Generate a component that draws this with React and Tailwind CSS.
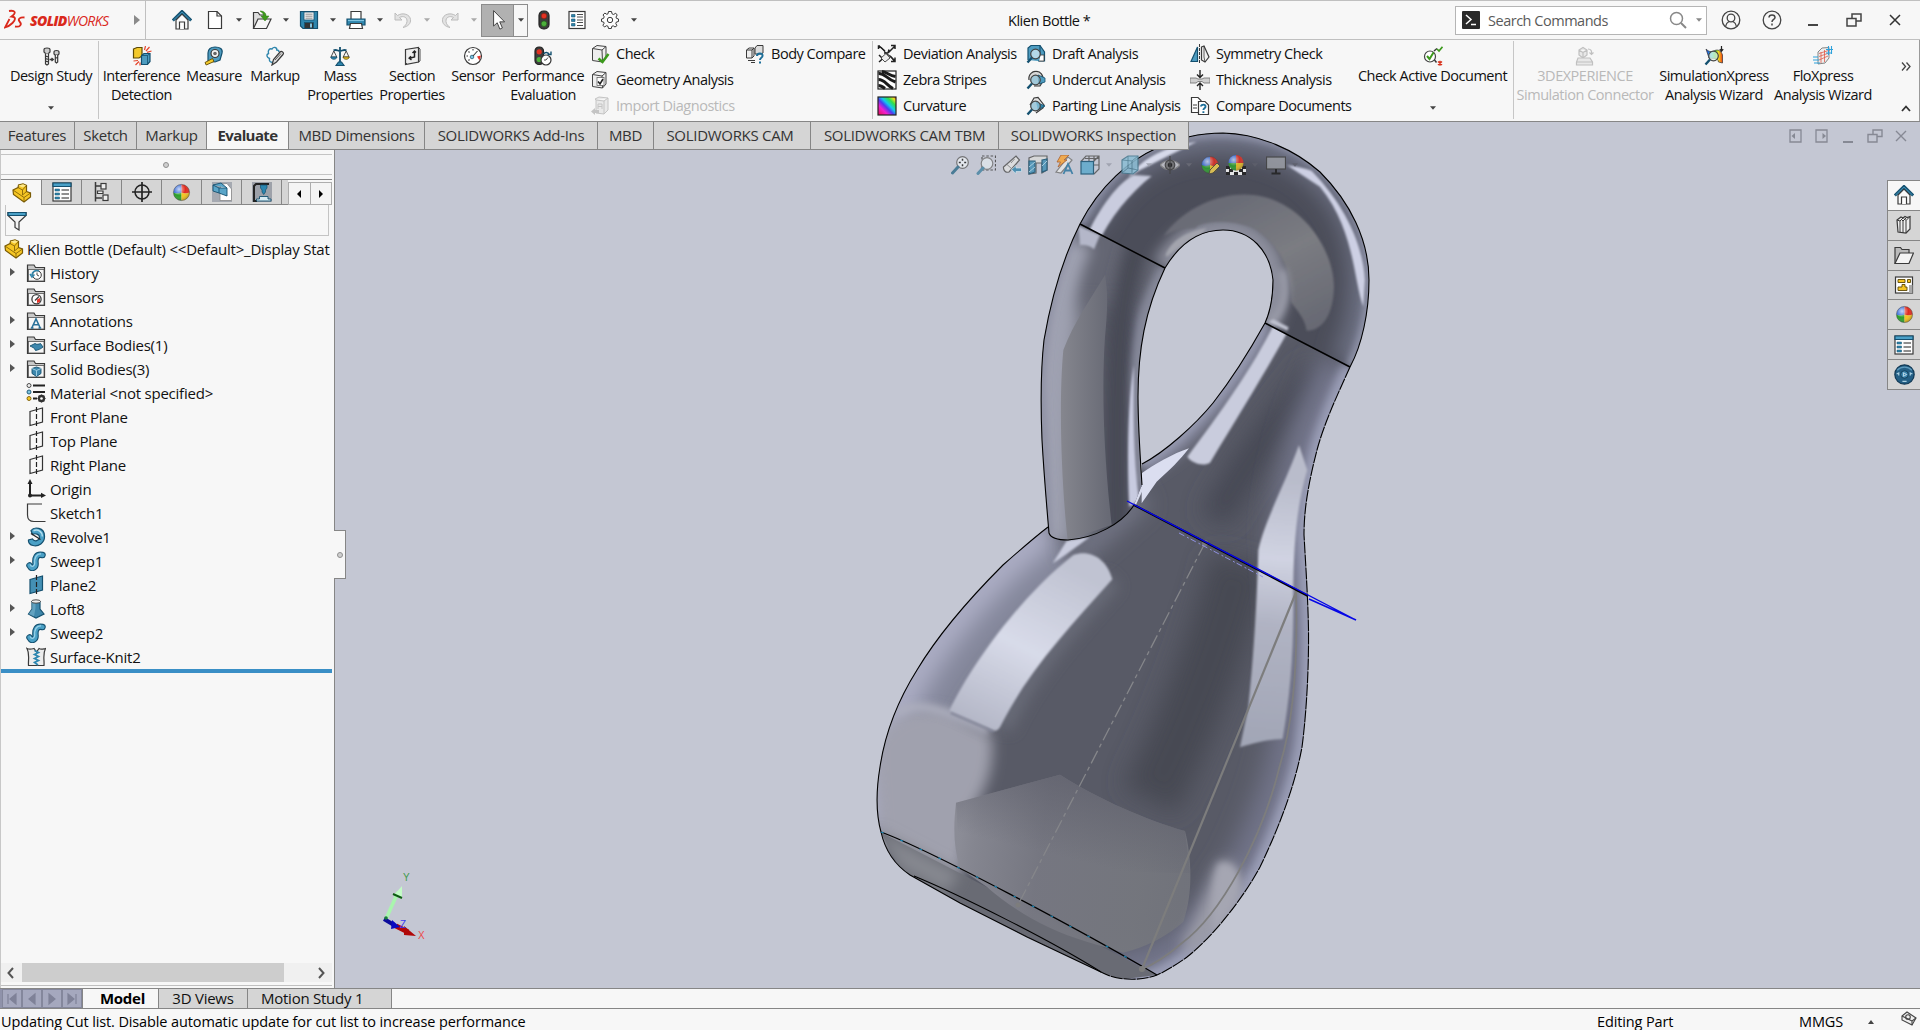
import React from "react";

/* ---------- generic helpers ---------- */
function Ic({ s = 20, children, className = "" }) {
  return (
    <svg width={s} height={s} viewBox="0 0 20 20" fill="none" stroke="#3a3a3a" strokeWidth="1.2" className={"block shrink-0 " + className}>
      {children}
    </svg>
  );
}

function Caret({ className = "", color = "#444" }) {
  return (
    <svg width="6" height="4" viewBox="0 0 7 4" className={"block shrink-0 " + className}>
      <path d="M0 0H7L3.5 4Z" fill={color} />
    </svg>
  );
}

const BL = "#2f86ad";
const DB = "#14506f";
const LB = "#7fc4e0";

/* ---------- title bar icons ---------- */
const Home = ({ s = 20 }) => (
  <Ic s={s}>
    <path d="M4 10V19H16V10L10 4Z" fill="#fafafa" />
    <path d="M7.5 19V12H12.5V19" fill="#fff" />
    <path d="M.8 10.5L10 1.5L19.2 10.5" stroke={DB} strokeWidth="3" />
    <path d="M1.5 10L10 2L18.5 10" stroke="#3f92b8" strokeWidth="1" />
  </Ic>
);
const NewDoc = () => (
  <Ic>
    <path d="M3.5 1.5H12L16.5 6V18.5H3.5Z" fill="#fff" />
    <path d="M12 1.5V6H16.5" />
  </Ic>
);
const OpenDoc = () => (
  <Ic>
    <path d="M1.5 18V2.500H6L8 5H13V9" fill="#ddd" />
    <path d="M1.500 18.500L6 9H19L14.500 18.500Z" fill="#f6f6f6" />
    <path d="M8 1C12 1 14 3 14 6H17L13 11L9 6H11.500C11.500 4 10.500 2.500 8 1Z" fill="#3e9a1c" stroke="#2c7a12" strokeWidth=".5" />
  </Ic>
);
const Save = () => (
  <Ic>
    <path d="M1.500 1.500H18.500V18.500H4L1.500 16Z" fill={BL} stroke={DB} />
    <rect x="5" y="2" width="10" height="8" fill="#f2f2f2" stroke={DB} strokeWidth=".8" />
    <path d="M6.500 4.200H13.500M6.500 6.200H13.500M6.500 8.200H13.500" stroke="#777" strokeWidth=".8" />
    <rect x="5.500" y="12.500" width="9" height="6" fill="#333" stroke={DB} strokeWidth=".6" />
    <rect x="11" y="13.500" width="2" height="4" fill={LB} stroke="none" />
  </Ic>
);
const Print = () => (
  <Ic>
    <path d="M5 9V1.500H15V9" fill="#fff" />
    <path d="M1 9H19V15H1Z" fill={BL} stroke={DB} />
    <path d="M2 10.500H18" stroke={LB} />
    <path d="M4.500 13.500H15.500L16.500 18.500H3.500Z" fill="#fff" />
  </Ic>
);
const Undo = ({ flip }) => (
  <Ic className={flip ? "-scale-x-100" : ""}>
    <path d="M2 3V10H9L6.500 7.500C10 5.500 14.500 7 14 11.500C13.800 14 12 16 10 17.500C15 16.500 18 13.500 17.500 9.500C17 4.500 10 2 4.500 5.500Z" fill="#e2e2e2" stroke="#bcbcbc" strokeWidth="1" />
  </Ic>
);
const Cursor = () => (
  <Ic s={22}>
    <path d="M6 1.500V15.500L9.300 12.500L11.700 18.300L14 17.200L11.600 11.700H16Z" fill="#fff" stroke="#444" strokeWidth=".9" />
  </Ic>
);
const Traffic = ({ s = 20 }) => (
  <Ic s={s}>
    <rect x="5" y="1" width="10" height="18" rx="4.500" fill="#3d3d3d" stroke="#222" />
    <circle cx="10" cy="6" r="2.800" fill="#e23222" stroke="#7c1a10" strokeWidth=".6" />
    <circle cx="10" cy="13.700" r="2.800" fill="#4db03c" stroke="#1e5c16" strokeWidth=".6" />
  </Ic>
);
const ListDoc = ({ s = 20 }) => (
  <Ic s={s}>
    <rect x="2" y="1.500" width="16" height="17" fill="#fff" />
    <path d="M4.500 4.500H8V7H4.500ZM4.500 9H8V11.500H4.500ZM4.500 13.500H8V16H4.500Z" fill={BL} stroke={DB} strokeWidth=".6" />
    <path d="M10 4.500H16M10 7H16M10 10H16M10 12.500H16M10 15.500H16" strokeWidth=".9" />
  </Ic>
);
const Gear = () => (
  <Ic>
    <path d="M8.500 1.500H11.500L12 3.800L13.600 4.500L15.700 3.200L17.200 5L16 7L16.400 8.300L18.500 9V11.500L16.400 12L15.800 13.600L17 15.600L15 17L13.200 15.800L11.800 16.300L11.300 18.500H8.500L8 16.300L6.500 15.700L4.500 17L2.900 15.200L4.100 13.300L3.600 12L1.500 11.500V9L3.600 8.400L4.200 6.800L3 4.900L4.900 3.100L6.800 4.300L8 3.800Z" strokeWidth="1" fill="#fcfcfc" />
    <circle cx="10" cy="10" r="2.700" strokeWidth="1" />
  </Ic>
);

/* ---------- ribbon icons ---------- */
const Bolts = () => (
  <Ic>
    <path d="M3 3.500C3 1.500 9 1.500 9 3.500V6L7.500 7.500H4.500L3 6Z" fill="#ccc" />
    <path d="M4.500 7.500V18L6 19L7.500 18V7.500M4.500 10L7.500 11M4.500 12.500L7.500 13.500M4.500 15L7.500 16" fill="#eee" />
    <path d="M13 6C13 4 18 4 18 6V8L17 9H14L13 8Z" fill="#ccc" />
    <path d="M14.300 9V16L15.500 17L16.700 16V9M14.300 11.500L16.700 12.200" fill="#eee" />
    <path d="M8.500 13.500H12M10.500 12L12.300 13.500L10.500 15" strokeWidth="1.300" />
  </Ic>
);
const Interf = () => (
  <Ic>
    <path d="M1.500 3L5 1.500H10V10L7 12H1.500Z" fill="#f3c92c" stroke="#5d4a06" />
    <path d="M9.500 9.500L12 7.500H18V15.500L15.500 18.500H9.500Z" fill="#4e9cc0" stroke={DB} />
    <path d="M9.500 9.500H15.500V18.500M15.500 9.500L18 7.500" stroke={DB} strokeWidth=".8" />
    <path d="M12.500 4L13.500 0M14 5L17.500 1M15 6.300L19.500 5M6 14.500L1.500 15M7 15.500L3.500 19M8 16.500V19.500" stroke="#e5452c" strokeWidth="1.200" />
  </Ic>
);
const Measure = () => (
  <Ic>
    <path d="M4 15V7C4 3 7 1 11 1C16 1 19 3 18 7L16 14L11 16Z" fill="#4e9cc0" stroke={DB} />
    <circle cx="11" cy="7.500" r="4" fill="#f4f4f4" />
    <circle cx="11" cy="7.500" r="1.800" fill="#666" stroke="none" />
    <path d="M8.500 12.500L1 16.500L2.200 19L10 15.500Z" fill="#f3c92c" stroke="#5d4a06" strokeWidth=".9" />
  </Ic>
);
const Markup = () => (
  <Ic>
    <path d="M8 16C5 17 4 14.500 4.500 12.500C1.500 11 1 8.500 3.500 7.500C2.500 4 5 2 7 3C8.500 .5 12 1 11.800 4C13.500 4 14 5 14 6" stroke={BL} strokeWidth="1.400" />
    <path d="M7 19L8.500 13.500L15 6C16.500 4.500 19.500 6.500 18 8.500L11.500 16Z" fill="#ddd" />
    <path d="M10 14L16 7.500" strokeWidth=".8" />
  </Ic>
);
const Mass = () => (
  <Ic>
    <path d="M10 1V17M3.500 4.500C6 3 8 5 10 5C12 5 14 3 16.500 4.500" stroke={DB} strokeWidth="1.800" />
    <path d="M6 19.500L8.500 16H11.500L14 19.500Z" fill={BL} stroke={DB} />
    <path d="M1 11L3.800 5L6.800 11Z" strokeWidth=".9" />
    <path d="M13.200 11L16.200 5L19 11Z" strokeWidth=".9" />
    <path d="M.7 11H7C6.500 14 1.200 14 .7 11Z" fill={BL} stroke={DB} strokeWidth=".8" />
    <path d="M13 11H19.300C18.800 14 13.500 14 13 11Z" fill="#f3c92c" stroke="#5d4a06" strokeWidth=".8" />
  </Ic>
);
const Section = () => (
  <Ic>
    <path d="M3.500 3.500L16.500 1.500V16L3.500 18.500Z" fill="#eee" />
    <path d="M3.500 18.500L5 17M16.500 1.500L18 3V15L16.500 16" strokeWidth=".9" />
    <path d="M12.500 5V11L7.500 12.200M10.500 7L12.500 5L14 6.500M9 10.200L7.200 12.200L9.500 13.800" strokeWidth="1.500" stroke="#222" />
  </Ic>
);
const Sensor = ({ s = 20 }) => (
  <Ic s={s}>
    <circle cx="10" cy="10" r="8.500" fill="#fff" />
    <path d="M14 10.500L18 9.500L16.500 14.500Z" fill="#e5352c" stroke="none" />
    <path d="M10 3V4.500M3.500 10H5M5.500 5.500L6.500 6.500M5.500 14.500L6.500 13.500" strokeWidth="1.100" />
    <circle cx="9" cy="11" r="1.800" fill={LB} stroke={DB} strokeWidth=".7" />
    <path d="M10 10L14.500 5" strokeWidth="1.100" />
  </Ic>
);
const Perf = () => (
  <Ic>
    <rect x="2" y="1" width="8.500" height="17.500" rx="4" fill="#3d3d3d" stroke="#222" />
    <circle cx="6.200" cy="5.800" r="2.600" fill="#e23222" stroke="none" />
    <circle cx="6.200" cy="13.500" r="2.600" fill="#4db03c" stroke="none" />
    <circle cx="13" cy="14" r="5" fill="#fff" stroke="#333" />
    <path d="M13 14L15 11.500M13 14H11" strokeWidth=".9" />
    <path d="M10.500 8C12 6 15 6 16.500 8.500M14.500 8.500H18L18 5.500" stroke={DB} strokeWidth="1.400" />
  </Ic>
);
const Cube = ({ fill = "#eee", stroke = "#444" }) => (
  <path d="M2.500 4.500L7 1.500L16 2.500V14L12.500 18L2.500 16.500ZM2.500 4.500L12 6L16 2.500M12 6L12.500 18" fill={fill} stroke={stroke} strokeWidth="1" />
);
const Check = () => (
  <Ic>
    <Cube />
    <path d="M8.500 14.500L12.500 18L18.500 10" stroke="#3c9a1c" strokeWidth="2.500" />
  </Ic>
);
const GeoA = () => (
  <Ic>
    <Cube />
    <rect x="7" y="7.500" width="7" height="8" fill="#fff" stroke="#555" strokeWidth=".7" />
    <path d="M8 11.500L10 13.800L13 9" stroke="#222" strokeWidth="1.600" />
  </Ic>
);
const ImpD = () => (
  <Ic>
    <path d="M5 3L9 1L18 2V14L14 18L6 17V4ZM6 4L14 5L18 2M14 5V18M8 8H12M8 8V13M12 8V13M8 10.500H12" fill="#e9e9e9" stroke="#c4c4c4" strokeWidth="1" />
    <path d="M1 15.500L5 12V14H9V17H5V19Z" fill="#c4c4c4" stroke="none" />
  </Ic>
);
const BodyC = () => (
  <Ic>
    <path d="M1.500 6L4 4H9V12L7 14H1.500ZM1.500 6H7V14M7 6L9 4" fill="#eee" strokeWidth="1" />
    <path d="M10 4L12 1.500H18V9L16 10H10Z" fill="#ddd" strokeWidth="1" />
    <path d="M3 16.500H10M6 18.500H10" strokeWidth="1" />
    <path d="M12 12C12 8.500 18 8.500 17.500 12C17.300 14 15 13.500 15 16M15 17.500V19.500" stroke="#1d6f99" strokeWidth="2" />
  </Ic>
);
const Dev = () => (
  <Ic>
    <path d="M2 2.500C6 3 6 7 10 10C13 12 16 13 17 18" stroke="#333" strokeWidth="1.200" />
    <path d="M2 2L8 7M18 2L11 9M3 2H1.500V5M18 5V1.500H14M11 9L12 5.500M11 9L7 9M14 17.500H18V13.500M18 17L13 12M2 11L6 15M2 18L10 11" strokeWidth="1.500" stroke="#222" />
    <path d="M4 14L9 9.500L13 14L8 18Z" fill="#eee" strokeWidth=".9" />
  </Ic>
);
const Zebra = () => (
  <Ic>
    <rect x="1" y="1" width="18" height="18" fill="#fff" stroke="#222" />
    <path d="M1.500 3.500C8 3 9 9 18.500 12M1.500 9.500C8 9.500 9 15 16 18.500M5 1.500C10 2 12 5.500 18.500 6.500M1.500 15.500C4 15.500 6 17 8 18.500" stroke="#1c1c1c" strokeWidth="2.900" />
  </Ic>
);
const Curv = () => (
  <Ic>
    <defs>
      <linearGradient id="curv" x1="0" y1="1" x2="1" y2="0">
        <stop offset="0" stopColor="#e8104a" />
        <stop offset=".28" stopColor="#f020d0" />
        <stop offset=".45" stopColor="#4b3cf0" />
        <stop offset=".58" stopColor="#12c8f0" />
        <stop offset=".75" stopColor="#2fe04a" />
        <stop offset=".9" stopColor="#f0e020" />
        <stop offset="1" stopColor="#f03010" />
      </linearGradient>
    </defs>
    <rect x="1" y="1" width="18" height="18" fill="url(#curv)" stroke="#222" />
  </Ic>
);
const Lens = ({ c = "#8fc3da" }) => (
  <>
    <circle cx="9.500" cy="10" r="4.800" fill={c} fillOpacity=".75" stroke="#444" />
    <path d="M6 13.500L1.500 18.500" stroke={DB} strokeWidth="2.400" />
  </>
);
const Draft = () => (
  <Ic>
    <path d="M2 16V4L5 1.500H14L18.500 8V17H12" fill="#4e9cc0" stroke={DB} />
    <path d="M14 1.500V17" stroke={DB} />
    <path d="M14.500 11H18V17H13" fill="#fff" strokeWidth=".8" />
    <Lens c="#d6ecf5" />
  </Ic>
);
const Undercut = () => (
  <Ic>
    <path d="M3 10C2 4 7 1 10 1.500C14 1 18 5 17 11L14 16H8" fill="#d8d8d8" />
    <path d="M12 5L19 8V12L13 14Z" fill="#4e9cc0" stroke={DB} strokeWidth=".8" />
    <Lens />
  </Ic>
);
const Parting = () => (
  <Ic>
    <path d="M4 9L8 2L12 1.500L18 9L17 12L10 17" fill="#e4e4e4" />
    <path d="M10 6L19 10L12 14" fill={BL} stroke={DB} strokeWidth=".8" />
    <Lens />
  </Ic>
);
const Symm = () => (
  <Ic>
    <path d="M1 17.500L7.500 3V17.500Z" fill="#4e9cc0" stroke={DB} />
    <path d="M9.500 0V20" strokeWidth="1" strokeDasharray="3 1" />
    <path d="M11.500 3L14 2L19 13L15 18L11.500 16Z" fill="#f2f2f2" />
    <path d="M14 2V13L15 18" strokeWidth=".8" />
  </Ic>
);
const Thick = () => (
  <Ic>
    <path d="M0 8H6L8 9H12L14 8H20V13H14L12 11.500H8L6 13H0Z" fill="#cfcfcf" stroke="#777" strokeWidth=".9" />
    <path d="M10 0V7M7 4.500L10 7.500L13 4.500M10 20V13M7 16L10 13L13 16" stroke="#222" strokeWidth="1.400" />
  </Ic>
);
const CompD = () => (
  <Ic>
    <path d="M1.500 1.500H8L11 4.500V16.500H1.500Z" fill="#fff" />
    <path d="M8.500 5.500H15L18.500 9V18.500H8.500Z" fill="#fff" />
    <path d="M3 9H7M3 12H7" strokeWidth="1" />
    <path d="M11 10.500C11 8 16 8 15.500 10.800C15.300 12.300 13.400 12.300 13.400 14M13.400 15.300V17" stroke="#1d6f99" strokeWidth="1.900" />
  </Ic>
);
const CheckAct = () => (
  <Ic>
    <circle cx="7" cy="10.500" r="5.500" fill="#fff" stroke="#444" />
    <path d="M4 10L6.500 13L10.500 6.500" stroke="#3c9a1c" strokeWidth="2" />
    <path d="M11 5L14 2.500M11.500 14L13.500 16.500" strokeWidth="1.500" />
    <path d="M14 3L16 5L19.500 .8" stroke="#3c9a1c" strokeWidth="1.700" />
    <path d="M15 15.500L19 19M19 15.500L15 19M17 14.800V19.700" stroke="#d8311c" strokeWidth="1.400" />
  </Ic>
);
const Conn3D = () => (
  <Ic>
    <path d="M4 4L8 1.500L12 4V9L8 12L4 9ZM4 4L8 6.500L12 4M8 6.500V12" fill="#e8e8e8" stroke="#c0c0c0" />
    <path d="M13 3C16 3 17 5 16.500 8M14.500 6.500L16.500 8.500L18.500 6.500" stroke="#c0c0c0" />
    <path d="M3 12H15L17.500 16V19H1.500V16ZM1.500 16H17.500" fill="#e8e8e8" stroke="#c0c0c0" />
  </Ic>
);
const SimX = () => (
  <Ic>
    <defs>
      <linearGradient id="simx" x1="0" y1="0" x2="1" y2="0">
        <stop offset="0" stopColor="#2038e0" />
        <stop offset=".35" stopColor="#20c8e8" />
        <stop offset=".55" stopColor="#38d030" />
        <stop offset=".75" stopColor="#f4e020" />
        <stop offset="1" stopColor="#f03a10" />
      </linearGradient>
    </defs>
    <path d="M2 3C5 6 7 6 10 5C13 3 17 4 18.500 9V17L14.500 16C14 11 8 13 5 12Z" fill="url(#simx)" stroke="#333" strokeWidth=".7" />
    <path d="M17.500 0V5M15.800 3.200L17.500 5.200L19.200 3.200" stroke="#222" />
    <Lens c="#e0f0e0" />
  </Ic>
);
const Flo = () => (
  <Ic>
    <path d="M5 6L9 2L16 1.500V12L12 17L5 18Z" fill="#eee" stroke="#777" strokeWidth=".9" />
    <path d="M6 7.500L17 4M6 10.500L16 7M6 14L15 10M8 6V17M11.500 4V16" stroke="#e05a4a" strokeWidth=".8" />
    <path d="M13 3.500H20M13 7H19M15.500 0V9M18.500 0V8M0 11H5M0 14H6M1 17H7" stroke="#2da2dc" strokeWidth="1.100" />
  </Ic>
);

/* ---------- feature tree icons ---------- */
const Part = () => (
  <Ic>
    <path d="M1 7L6 4.500L6.500 2L11 .8L14.500 2.500V8.500L18.500 10V14L12 19L1.500 11.500Z" fill="#f6c624" stroke="#7a5b05" />
    <path d="M6 4.500L10.500 7L14.500 2.500M10.500 7V12L14.500 8.500M1 7L12 14.500L18.500 10M12 14.500V19" stroke="#7a5b05" strokeWidth=".8" />
    <path d="M6.500 2.500L10.500 4.500L14 2.500L11 1.200Z" fill="#fde88a" stroke="none" />
  </Ic>
);
const Fold = ({ children }) => (
  <Ic>
    <path d="M1.500 18.500V2H8L9.500 4.500H18.500V18.500Z" fill="#c9c9c9" />
    <rect x="2.500" y="6.500" width="15.500" height="11.500" fill="#f6f6f6" stroke="#555" strokeWidth=".8" />
    {children}
  </Ic>
);
const FHist = () => (
  <Fold>
    <circle cx="11" cy="12" r="4.300" fill="#fff" strokeWidth="1" />
    <path d="M11 9.500V12L13 13" strokeWidth=".9" />
    <path d="M13 8C9 6.500 6 9 6 12M4 11L6 14L8.500 11.500" stroke={BL} strokeWidth="1.500" />
  </Fold>
);
const FSens = () => (
  <Fold>
    <circle cx="10.500" cy="12.200" r="4.600" fill="#fff" strokeWidth="1.300" />
    <path d="M11 12.500L14 11V15L11 16Z" fill="#e5352c" stroke="none" />
    <path d="M9 13.500L13 9.500" strokeWidth="1.200" />
  </Fold>
);
const FAnn = () => (
  <Fold>
    <path d="M6 16.500L10 8L14 16.500M7.500 13.800H12.500M4.800 17H7.500M12.500 17H15.200" stroke="#2b7199" strokeWidth="1.600" />
  </Fold>
);
const FSurf = () => (
  <Fold>
    <path d="M4 11L9 8.500C11 10 13 9 14.500 8.500L17 12C15 14 12 15 9.500 15.500C9 13 6 12 4 11Z" fill="#3d87ad" stroke={DB} strokeWidth=".9" />
  </Fold>
);
const FSolid = () => (
  <Fold>
    <path d="M6 9.500L10.500 8L15 9.500V14.500L10.500 17.500L6 14.500Z" fill="#3d87ad" stroke={DB} strokeWidth=".9" />
    <path d="M6 9.500L10.500 11.500L15 9.500M10.500 11.500V17" stroke="#a8d6ea" strokeWidth=".9" />
  </Fold>
);
const Material = () => (
  <Ic>
    <circle cx="3" cy="2.500" r="2" fill="#eee" strokeWidth=".9" />
    <circle cx="3" cy="9" r="2" fill={LB} stroke={DB} strokeWidth=".9" />
    <circle cx="3" cy="15.500" r="2" fill="#f6c624" stroke="#7a5b05" strokeWidth=".9" />
    <path d="M7 2.500H19M7 9H19M7 15.500H11" stroke="#222" strokeWidth="1.800" />
    <circle cx="15.500" cy="15.500" r="2.600" stroke="#333" strokeWidth="2.200" />
    <path d="M15.500 11.500V19.500M11.500 15.500H19.500M12.700 12.700L18.300 18.300M18.300 12.700L12.700 18.300" stroke="#333" strokeWidth="1.200" />
    <circle cx="15.500" cy="15.500" r="1.300" fill="#fff" stroke="none" />
  </Ic>
);
const Plane = ({ solid }) => (
  <Ic>
    <path d="M4 4.500L16.500 1V15L4 18.500Z" fill={solid ? "#4490b5" : "none"} stroke={solid ? DB : "#333"} />
    <path d="M10.500 0V20" strokeDasharray="5 2" stroke="#222" />
  </Ic>
);
const Origin = () => (
  <Ic>
    <path d="M4 16.500V4M4 16.500H16" stroke="#222" strokeWidth="2" />
    <path d="M1.500 5L4 0L6.500 5ZM15 13.800L20 16.500L15 19Z" fill="#222" stroke="none" />
    <circle cx="4" cy="16.500" r="2" fill="#222" stroke="none" />
  </Ic>
);
const SketchI = () => (
  <Ic>
    <path d="M16 1H1.500V12C1.500 16 4 18.500 8 18.500H19.500" strokeWidth="1.200" />
  </Ic>
);
const Revolve = () => (
  <Ic>
    <path d="M5 3.500C8 -.5 18.500 0 18.500 9C19 16 12 20 7 18.500C4 18 2 15.500 2.500 13L6.500 12C8 15 14 14 13.500 10C13.500 7 9 6 6.500 7.500Z" fill="#4aa0c6" stroke={DB} />
    <path d="M7.500 3.800C12 1.500 16.500 5 16.300 9.500" stroke="#b5e0f0" strokeWidth="1.300" />
    <path d="M5 6.500L14.500 12.500" stroke="#222" strokeWidth="1.300" />
  </Ic>
);
const Sweep = () => (
  <Ic>
    <path d="M3.500 14.500C6 19 10 16.500 9.500 12C9 7 10.500 2.500 16.500 4" stroke={DB} strokeWidth="6.500" strokeLinecap="round" />
    <path d="M3.500 14.500C6 19 10 16.500 9.500 12C9 7 10.500 2.500 16.500 4" stroke="#4aa0c6" strokeWidth="4.300" strokeLinecap="round" />
    <path d="M4 13.500C6 17 9 15 8.700 12C8.200 7 10.500 2.500 15 3" stroke="#9ad2e8" strokeWidth="1.300" />
  </Ic>
);
const Loft = () => (
  <Ic>
    <path d="M6 2.500V10L2.500 15L10 19L18 15L14 10V2.500Z" fill="#3f87ab" stroke={DB} />
    <path d="M6 2.500V10L2.500 15L8 17.500L9.500 9V3Z" fill="#85bdd6" stroke="none" opacity=".5" />
    <ellipse cx="10" cy="2.500" rx="4.500" ry="1.700" fill="#eee" strokeWidth=".9" />
  </Ic>
);
const Knit = () => (
  <Ic>
    <path d="M1 1.500C4 3 6 2 8 1.500L10.500 5L13 1.500C15 3 17 2 19.500 1.500C16.500 7 18.500 13 18 18.500H2.500C2 13 4 7 1 1.500Z" fill="#ececec" />
    <path d="M8.500 3.500L12.500 5.500L8.500 7.500L12.500 9.500L8.500 11.500L12.500 13.500L8.500 15.500L12 18" stroke="#2b86b0" strokeWidth="1.700" />
  </Ic>
);
const Funnel = () => (
  <Ic>
    <path d="M1 1.500H19V4.500L12 11V19L8 16.500V11L1 4.500Z" fill="#f3f3f3" />
    <path d="M1 1.500H19V4.500H1Z" fill="#4aa0c6" stroke={DB} />
  </Ic>
);
const Tree = () => (
  <Ic>
    <path d="M3.500 0V19.500M3.500 4H10M3.500 16H10" strokeWidth="1.500" />
    <rect x="9" y="1.500" width="5" height="5.500" fill="#eee" />
    <rect x="11" y="13" width="5" height="5.500" fill="#eee" />
    <path d="M5.500 9H11V11.500H5.500Z" fill="#eee" />
  </Ic>
);
const Cross = () => (
  <Ic>
    <circle cx="10" cy="10" r="7" stroke="#222" strokeWidth="1.500" />
    <path d="M10 0V20M0 10H20" stroke="#222" strokeWidth="1.700" />
  </Ic>
);
const Ball = ({ s = 20, children }) => (
  <Ic s={s}>
    <defs>
      <radialGradient id="ballg" cx=".35" cy=".3" r=".8">
        <stop offset="0" stopColor="#fff" stopOpacity=".75" />
        <stop offset=".5" stopColor="#fff" stopOpacity="0" />
        <stop offset="1" stopColor="#000" stopOpacity=".35" />
      </radialGradient>
    </defs>
    <path d="M10 10V1.500A8.500 8.500 0 0 0 1.500 10Q5 12 10 10Z" fill="#2a62d8" stroke="none" />
    <path d="M10 10V1.500A8.500 8.500 0 0 1 18.500 10Q14 12 10 10Z" fill="#e02a1e" stroke="none" />
    <path d="M10 10Q5 12 1.500 10A8.500 8.500 0 0 0 10 18.500Z" fill="#2ba02a" stroke="none" />
    <path d="M10 10Q14 12 18.500 10A8.500 8.500 0 0 1 10 18.500Z" fill="#f4c41c" stroke="none" />
    <circle cx="10" cy="10" r="8.500" fill="url(#ballg)" stroke="#444" strokeWidth=".5" />
    {children}
  </Ic>
);
const DimX = () => (
  <Ic>
    <rect x="0" y="0" width="20" height="20" fill="#a5a9b1" stroke="none" />
    <path d="M8 11L9 2L15 1.500L19.500 7V18.500H8Z" fill="#fff" stroke="#888" strokeWidth=".8" />
    <path d="M1 3L9 1L15 6V14L7 11L1 9ZM1 3L7 6L15 6M7 6V11" fill="#5aa5c8" stroke={DB} strokeWidth=".9" />
  </Ic>
);
const Cam = () => (
  <Ic>
    <rect x="0" y="0" width="20" height="20" fill="#9da1a9" stroke="none" />
    <path d="M5 19H2V4L4 2H17" stroke="#222" strokeWidth="2" />
    <path d="M8.500 3H15V6L13.500 8V10L11.700 12.500L10 10V8L8.500 6Z" fill="#2b86b0" stroke={DB} strokeWidth=".7" />
    <path d="M7.500 14.500H16V17H19V19H4.500V17H7.500Z" fill="#d8ebf3" stroke={DB} strokeWidth=".9" />
  </Ic>
);
const PropM = () => (
  <Ic>
    <rect x="1" y="1" width="18" height="18" fill="#fdfdfd" />
    <path d="M1 1H19V4.500H1Z" fill="#4aa0c6" stroke={DB} />
    <path d="M3 7H7.500V9H3ZM3 11H7.500V13H3ZM3 15H7.500V17H3Z" fill={BL} stroke={DB} strokeWidth=".5" />
    <path d="M9.500 8H17M9.500 12H17M9.500 16H17" stroke="#222" />
  </Ic>
);

/* ---------- model view icons ---------- */
const ZFit = () => (
  <Ic>
    <circle cx="12.500" cy="7.500" r="5.800" fill="#e9edf2" stroke="#666" />
    <path d="M12.500 3.800V11.200M8.800 7.500H16.200" strokeDasharray="2 3.400" stroke="#222" strokeWidth="1.500" />
    <path d="M8 12L2.500 18" stroke="#356f8c" strokeWidth="3" strokeLinecap="round" />
  </Ic>
);
const ZArea = () => (
  <Ic>
    <rect x="6" y="1" width="13.500" height="14" strokeDasharray="2.500 1.800" stroke="#444" />
    <circle cx="11" cy="8.500" r="5.800" fill="#dfe4ea" stroke="#777" />
    <path d="M7 13L2 18.500" stroke="#4a86a3" strokeWidth="3" strokeLinecap="round" />
  </Ic>
);
const Prev = () => (
  <Ic>
    <path d="M1.500 12L14 1L17.500 5L7 17C4 18 1 15.500 1.500 12Z" fill="#e0e0e0" stroke="#555" />
    <path d="M9 8L12.500 4M5 9.500L10 14" stroke="#777" strokeWidth=".9" />
    <path d="M9.500 14.500L14 10.500V13H19.500V16.500H14V18.700Z" fill="#3a86ac" stroke="#d5e8f0" strokeWidth=".7" />
  </Ic>
);
const SecV = () => (
  <Ic>
    <path d="M1 6V3L6 1H19V15L14 18V8H8V18L1 19Z" fill="#dadada" stroke="#555" />
    <path d="M1 6H7V17L1 19ZM14 5L19 4V15L14 17Z" fill="#4490b5" stroke={DB} />
    <path d="M1 12L7 7M1 17L7 12M14 11L19 6" stroke="#bfe0ee" strokeWidth=".8" />
  </Ic>
);
const DynA = () => (
  <Ic>
    <path d="M2 17L14 2L18 5L7 18Z" fill="#e6e6e6" stroke="#777" />
    <path d="M7 0H15L10 5H13L4 12L6.500 7H3Z" fill="#f6a43a" stroke="#a4511a" strokeWidth=".8" />
    <path d="M9.500 19L14 9L18.500 19M11.200 15.500H16.800" stroke="#2e77a0" strokeWidth="1.800" />
  </Ic>
);
const ViewO = () => (
  <Ic>
    <path d="M1 6.500L6 1H19V14L14 19M13.500 6.500L19 1M9 1V6M14 1V6M5 3.500H19M14 10H19" fill="none" stroke="#555" />
    <rect x="1" y="6.500" width="12.500" height="12.500" fill="#5fa9cb" stroke={DB} />
  </Ic>
);
const Disp = () => (
  <Ic>
    <path d="M2 5L8 1H18V15L13 19L2 18Z" fill="#8bbdd4" stroke="#47788e" />
    <path d="M2 5L12 6L18 1M12 6V19M8 1V13L2 18M8 13L18 15" stroke="#47788e" strokeWidth=".8" />
  </Ic>
);
const Eye = () => (
  <Ic>
    <path d="M0 10C5 4 15 4 20 10C15 16 5 16 0 10Z" fill="#c5c6cc" stroke="#888" />
    <circle cx="10" cy="10" r="4.800" fill="#777" stroke="#444" />
    <circle cx="10" cy="10" r="2.300" fill="#222" stroke="none" />
    <path d="M10 1V19" stroke="#444" />
  </Ic>
);
const BallPen = () => (
  <Ball>
    <path d="M9 19L10 15L17 8L20 11L13 18Z" fill="#f0cf52" stroke="#444" strokeWidth=".9" />
  </Ball>
);
const BallScene = () => (
  <Ic>
    <path d="M0 11H20V20H0Z" fill="#fff" stroke="none" />
    <path d="M0 11H4V14H0ZM16 11H20V14H16ZM3 14H7V17H3ZM13 14H17V17H13ZM0 17H4V20H0ZM8 17H12V20H8ZM16 17H20V20H16Z" fill="#222" stroke="none" />
    <path d="M10 8V0A7.500 8 0 0 0 2.500 8Z" fill="#2a62d8" stroke="none" />
    <path d="M10 8V0A7.500 8 0 0 1 17.500 8Z" fill="#e02a1e" stroke="none" />
    <path d="M10 8H2.500A7.500 7.500 0 0 0 10 15.500Z" fill="#2ba02a" stroke="none" />
    <path d="M10 8H17.500A7.500 7.500 0 0 1 10 15.500Z" fill="#f4c41c" stroke="none" />
    <circle cx="10" cy="8" r="7.700" fill="url(#ballg)" stroke="none" />
  </Ic>
);
const Monitor = () => (
  <Ic>
    <rect x="0.500" y="2" width="19" height="12" fill="#9a9da4" stroke="#444" />
    <path d="M10 14V18M5.500 18.500H14.500" stroke="#222" strokeWidth="2" />
  </Ic>
);

/* ---------- task pane icons ---------- */
const Books = () => (
  <Ic>
    <path d="M3 5L7 2L9 3L11 1.500L13 2.500L16 1.500V14L12 18L4 17Z" fill="#f0f0f0" />
    <path d="M3 5L6 6V17.500M7 4L9 6V18M10 3.500L12 5.500V18M6 6L9 3M9 6L12 3M12 5.500L16 1.500" strokeWidth="1" />
  </Ic>
);
const Folder = () => (
  <Ic>
    <path d="M1 18.500V2.500H6.500L8 4.500H15V8" fill="#bbb" />
    <path d="M1 18.500L6 8H19.500L15 18.500Z" fill="#f4f4f4" />
  </Ic>
);
const Palette = () => (
  <Ic>
    <rect x="1.500" y="2" width="17" height="16" fill="#fff" />
    <path d="M4 4.500H11V7.500H4ZM13.500 4.500H16.500V7.500H13.500ZM8 9.500H11V12H13V15.500H4V12H8Z" fill="#f6c624" stroke="#5d4a06" strokeWidth=".9" />
    <path d="M15 10H18.500V18H15Z" fill="#aaa" stroke="none" />
  </Ic>
);
const Forum = () => (
  <Ic s={21}>
    <circle cx="10" cy="10" r="9.200" fill="#235f85" stroke="#123a55" />
    <path d="M3 6C7 2 13 2 17 6" stroke="#5d9bbd" strokeWidth="1.200" />
    <circle cx="10" cy="10" r="3.600" fill="#3c86b0" stroke="#123a55" strokeWidth=".8" />
    <path d="M9 8.300L12 10L9 11.700Z" stroke="#cfe6f2" strokeWidth=".8" />
    <path d="M2.500 9.500L4.500 8.500V11M17.500 9.500L15.500 8.500V11M8 16.500H12" stroke="#a9cfe0" strokeWidth="1.200" />
  </Ic>
);

/* ---------- ribbon building blocks ---------- */
function Big({ w, icon, lines, caret, off }) {
  return (
    <div className={"flex shrink-0 flex-col items-center pt-[6px] " + w}>
      {icon}
      <div className={"whitespace-nowrap text-center leading-[19px] " + (off ? "text-[#b9b9b9]" : "")}>
        {lines.map((l) => (
          <div key={l}>{l}</div>
        ))}
      </div>
      {caret && <Caret className="mt-[21px]" />}
    </div>
  );
}
function Col({ w, items }) {
  return (
    <div className={"flex shrink-0 flex-col pl-[4px] pt-[1px] " + w}>
      {items.map(([icon, label, off]) => (
        <div key={label} className={"flex h-[26px] items-center gap-[6px] whitespace-nowrap " + (off ? "text-[#b9b9b9]" : "")}>
          {icon}
          <span className="-mt-[1px]">{label}</span>
        </div>
      ))}
    </div>
  );
}
const VSep = () => <div className="mt-[1px] h-[78px] w-px shrink-0 bg-[#c6c6c6]" />;

const tabs = [
  ["Features", "w-[75px]"],
  ["Sketch", "w-[62px]"],
  ["Markup", "w-[70px]"],
  ["Evaluate", "w-[82px]"],
  ["MBD Dimensions", "w-[136px]"],
  ["SOLIDWORKS Add-Ins", "w-[173px]"],
  ["MBD", "w-[56px]"],
  ["SOLIDWORKS CAM", "w-[157px] pr-[4px]"],
  ["SOLIDWORKS CAM TBM", "w-[188px]"],
  ["SOLIDWORKS Inspection", "w-[190px]"],
];

const tree = [
  [<FHist />, "History", 1],
  [<FSens />, "Sensors", 0],
  [<FAnn />, "Annotations", 1],
  [<FSurf />, "Surface Bodies(1)", 1],
  [<FSolid />, "Solid Bodies(3)", 1],
  [<Material />, "Material <not specified>", 0],
  [<Plane />, "Front Plane", 0],
  [<Plane />, "Top Plane", 0],
  [<Plane />, "Right Plane", 0],
  [<Origin />, "Origin", 0],
  [<SketchI />, "Sketch1", 0],
  [<Revolve />, "Revolve1", 1],
  [<Sweep />, "Sweep1", 1],
  [<Plane solid />, "Plane2", 0],
  [<Loft />, "Loft8", 1],
  [<Sweep />, "Sweep2", 1],
  [<Knit />, "Surface-Knit2", 0],
];

/* ---------- 3D model ---------- */
const OUTER_R = "M1350 367C1342 385 1325 420 1317 450C1308 485 1304 510 1304 535C1306 570 1308 600 1308.500 630C1309 680 1305 725 1302 747C1297 775 1285 815 1260 867C1245 895 1215 935 1187 957C1175 966 1160 974 1157 975C1145 980 1120 982 1103 973";
const OUTER_L = "M1103 973L1027 937L960 903L910 875C895 865 885 850 881 832C875 810 877 785 880 767C884 740 895 705 917 670C935 640 965 603 1003 565C1020 550 1035 537 1048 527";
const LEFT_EDGE = "M881 832C875 810 877 785 880 767C884 740 895 705 917 670C935 640 965 603 1003 565C1020 550 1035 537 1048 527";
const BOTTLE = OUTER_R + OUTER_L.replace("M", "L") + "L1100 480L1142 485L1142 464C1165 452 1195 425 1213 403C1235 375 1250 350 1265 323Z";
const LOOP = "M1080 224C1100 185 1130 160 1157 148C1180 137 1200 133 1223 133C1260 134 1295 150 1320 172C1350 202 1369 240 1369 280C1369 312 1362 345 1350 367L1265 323C1270 312 1273 298 1273 280C1270 250 1250 230 1223 230C1200 230 1180 243 1165 268Z";
const TUBE = "M1080 224C1062 260 1050 305 1044 340C1040 375 1041 415 1042 440C1044 475 1047 510 1049 533C1051 539 1060 540 1068 540C1095 538 1122 524 1134 505L1142 485C1140 455 1138 425 1138 397C1138 350 1145 310 1165 268Z";

function Blur({ id, sd }) {
  return (
    <filter id={id} x="-200" y="-200" width="2400" height="2400" filterUnits="userSpaceOnUse">
      <feGaussianBlur stdDeviation={sd} />
    </filter>
  );
}

function Model() {
  return (
    <svg viewBox="0 122 1920 866" width="1920" height="866" className="absolute left-0 top-0 block" fill="none">
      <defs>
        <clipPath id="cb"><path d={BOTTLE} /></clipPath>
        <clipPath id="cl"><path d={LOOP} /></clipPath>
        <clipPath id="ct"><path d={TUBE} /></clipPath>
        <Blur id="b4" sd="4" />
        <Blur id="b12" sd="12" />
        <Blur id="c1" sd="2.500" />
        <Blur id="c4" sd="11" />
        <Blur id="c8" sd="20" />
        <Blur id="c12" sd="32" />
        <linearGradient id="gHi" x1="600" y1="250" x2="350" y2="740" gradientUnits="userSpaceOnUse">
          <stop offset="0" stopColor="#c0c3d2" /><stop offset=".5" stopColor="#d8dbe9" /><stop offset="1" stopColor="#b3b6c6" />
        </linearGradient>
        <linearGradient id="gRh" x1="1280" y1="0" x2="1210" y2="790" gradientUnits="userSpaceOnUse">
          <stop offset="0" stopColor="#b9bccb" /><stop offset=".3" stopColor="#d0d3e2" /><stop offset=".55" stopColor="#b0b3c3" /><stop offset="1" stopColor="#a2a6b6" />
        </linearGradient>
        <linearGradient id="gBase" x1="300" y1="1100" x2="980" y2="1200" gradientUnits="userSpaceOnUse">
          <stop offset="0" stopColor="#8a8b95" /><stop offset=".35" stopColor="#777882" /><stop offset=".8" stopColor="#75777e" /><stop offset="1" stopColor="#72747c" />
        </linearGradient>
        <linearGradient id="gBaseTop" x1="660" y1="880" x2="600" y2="1130" gradientUnits="userSpaceOnUse">
          <stop offset="0" stopColor="#60616d" stopOpacity=".8" /><stop offset="1" stopColor="#60616d" stopOpacity="0" />
        </linearGradient>
        <linearGradient id="gTube" x1="124" y1="0" x2="430" y2="0" gradientUnits="userSpaceOnUse">
          <stop offset="0" stopColor="#85879a" /><stop offset=".1" stopColor="#a0a2b2" /><stop offset=".35" stopColor="#7e808c" /><stop offset=".62" stopColor="#565864" /><stop offset=".78" stopColor="#494b57" /><stop offset=".95" stopColor="#72758a" /><stop offset="1" stopColor="#9497ad" />
        </linearGradient>
        <linearGradient id="gFacet" x1="185" y1="0" x2="325" y2="0" gradientUnits="userSpaceOnUse">
          <stop offset="0" stopColor="#85868e" /><stop offset="1" stopColor="#686a75" />
        </linearGradient>
        <linearGradient id="gIn" x1="740" y1="220" x2="950" y2="630" gradientUnits="userSpaceOnUse">
          <stop offset="0" stopColor="#6a6c76" /><stop offset=".45" stopColor="#7b7c82" /><stop offset="1" stopColor="#666872" />
        </linearGradient>
      </defs>

      {/* bottle body and neck */}
      <g clipPath="url(#cb)">
        <path d={BOTTLE} fill="#585a66" />
        <path d="M1240 560C1220 640 1190 720 1150 800" stroke="#474853" strokeWidth="60" filter="url(#b12)" />
        <path d="M1320 370C1280 420 1240 470 1215 520" stroke="#454752" strokeWidth="30" filter="url(#b12)" />
        <path d={LEFT_EDGE} stroke="#83869a" strokeWidth="130" filter="url(#b12)" />
        <path d={LEFT_EDGE} stroke="#adafc6" strokeWidth="36" filter="url(#b12)" />
        <path d={OUTER_R} stroke="#72758a" strokeWidth="64" filter="url(#b12)" />
        <path d={OUTER_R} stroke="#9a9db6" strokeWidth="16" filter="url(#b4)" />
        <g transform="translate(860 480) scale(.33333)">
          <path d="M640 225C700 190 780 100 850 50" stroke="#737686" strokeWidth="70" filter="url(#c12)" />
          <path d="M757 298C620 450 500 580 425 745" stroke="#676a77" strokeWidth="60" filter="url(#c8)" />
          <path d="M40 800C90 690 200 670 280 705L395 765C400 830 400 900 330 1000L300 1200L60 1080Z" fill="#a0a1ae" filter="url(#c8)" />
          <path d="M110 700C160 660 240 690 300 715L385 755" stroke="#adafbe" strokeWidth="22" filter="url(#c4)" />
          <path d="M62 1057L890 1485L770 1500L300 1270L120 1165Z" fill="#696b74" />
          <path d="M50 1050L300 1180L260 1240L120 1165Z" fill="#868890" filter="url(#c8)" />
          <path d="M288 968L600 884C720 960 860 1020 975 1053C995 1130 1000 1240 970 1325C920 1370 860 1400 790 1418L680 1385C560 1350 460 1290 380 1220L300 1165C280 1100 280 1040 288 968Z" fill="url(#gBase)" fillOpacity=".95" />
          <path d="M288 968L600 884C720 960 860 1020 975 1053L990 1180L300 1165Z" fill="url(#gBaseTop)" />
          <path d="M1000 1420C1060 1380 1140 1280 1140 1200C1130 1140 1080 1120 1060 1180C1040 1250 1000 1330 960 1400Z" fill="#9b9ca8" filter="url(#c8)" />
          <path d="M1075 1150C1120 1140 1145 1180 1138 1240C1120 1290 1090 1330 1060 1360C1050 1290 1060 1200 1075 1150Z" fill="#a5a6b2" filter="url(#c4)" />
          <path d="M578 250L620 182L690 170C650 200 610 230 578 250Z" fill="#c9ccde" filter="url(#c1)" />
          <path d="M268 692C330 560 480 350 640 225C690 208 740 235 757 298C620 450 500 580 420 742C412 756 400 754 385 745Z" fill="url(#gHi)" filter="url(#c1)" />
          <path d="M272 699L400 754" stroke="#84879a" strokeWidth="6" filter="url(#c1)" />
          <path d="M1317 -105C1280 0 1215 120 1195 210C1190 400 1178 560 1165 680L1140 802C1190 786 1230 778 1268 777C1290 650 1302 520 1300 350C1300 200 1310 80 1342 -30Z" fill="url(#gRh)" filter="url(#c1)" />
        </g>
        <g transform="translate(1000 120) scale(.33333)">
          <path d="M795 608C740 720 660 840 540 950C500 985 460 1010 425 1033" stroke="#84879c" strokeWidth="80" filter="url(#c8)" />
          <path d="M795 608C740 720 660 840 540 950C500 985 460 1010 425 1033" stroke="#9a9db4" strokeWidth="22" filter="url(#c4)" />
          <path d="M822 612L864 634C800 750 720 880 630 1028C610 1040 575 1030 562 1010C660 880 760 740 822 612Z" fill="#c9ccdd" filter="url(#c1)" />
          <path d="M567 985C520 1000 460 1035 425 1060V1150L470 1085C510 1050 540 1020 567 985Z" fill="#dbdef0" />
          <path d="M400 1155L425 1100" stroke="#d9dcee" strokeWidth="14" />
        </g>
      </g>

      {/* upper loop */}
      <g clipPath="url(#cl)">
        <path d={LOOP} fill="#4b4d59" />
        <g transform="translate(1000 120) scale(.33333)">
          <path d="M240 313C330 120 480 40 670 40C960 50 1108 250 1108 480C1108 600 1080 680 1050 740" stroke="#6c6f82" strokeWidth="120" filter="url(#c12)" />
          <path d="M240 313C330 120 480 40 670 40C960 50 1108 250 1108 480C1108 600 1080 680 1050 740" stroke="#9194aa" strokeWidth="26" filter="url(#c4)" />
          <path d="M495 445C540 360 600 330 670 330C760 330 820 400 820 480C820 560 800 600 780 630" stroke="#8d8f9d" strokeWidth="80" filter="url(#c8)" />
          <path d="M490 350C560 250 680 215 760 225C900 240 1000 380 1002 500C1000 580 970 632 920 632C915 590 880 560 873 545C875 450 840 380 770 330C710 295 600 300 585 325C550 325 510 335 490 350Z" fill="url(#gIn)" filter="url(#c1)" />
          <path d="M497 405C510 370 550 335 620 325L600 347C560 360 530 390 500 410Z" fill="#a3a4ad" filter="url(#c1)" />
          <path d="M845 450C860 500 860 560 810 610" stroke="#9b9daa" strokeWidth="26" filter="url(#c4)" />
          <path d="M250 368C290 280 340 200 400 165L455 168C390 220 330 290 287 385Z" fill="#c9ccde" filter="url(#c1)" />
          <path d="M385 172C430 110 500 78 590 65C520 100 460 130 420 150Z" fill="#d6d9ea" filter="url(#c1)" />
          <path d="M860 135C890 140 915 145 935 152C1040 260 1090 380 1095 480L1090 560C1060 480 1065 330 960 200Z" fill="#cdd0e4" filter="url(#c1)" />
          <path d="M805 605L862 632L866 622L820 598Z" fill="#c0c2d0" filter="url(#c1)" />
        </g>
      </g>

      {/* left tube */}
      <g clipPath="url(#ct)">
        <path d={TUBE} fill="#646673" />
        <g transform="translate(1000 120) scale(.33333)">
          <path d="M100 560H460V1300H100Z" fill="url(#gTube)" filter="url(#c12)" />
          <path d="M225 360C170 480 140 620 134 1250" stroke="#9fa1b1" strokeWidth="110" filter="url(#c8)" />
          <path d="M420 360C370 500 340 650 355 1250" stroke="#474954" strokeWidth="70" filter="url(#c8)" />
          <path d="M495 445C430 560 413 700 413 830L427 1095" stroke="#858899" strokeWidth="40" filter="url(#c4)" />
          <path d="M240 313C165 450 130 620 124 800L147 1240" stroke="#8a8ca0" strokeWidth="16" filter="url(#c4)" />
          <path d="M235 318L300 345L282 388C270 376 250 374 240 376Z" fill="#b4b7c9" filter="url(#c1)" />
          <path d="M190 690C220 610 270 540 315 465C325 520 322 580 315 650C305 800 310 1000 335 1215L203 1260C185 1100 175 850 190 690Z" fill="url(#gFacet)" />
          <path d="M402 735C385 830 380 1000 388 1160L417 1140C400 1010 400 870 402 735Z" fill="#c8cbe0" filter="url(#c1)" />
        </g>
      </g>

      {/* edges */}
      <g stroke="#000" strokeWidth="1.100">
        <path d={OUTER_R} strokeDasharray="12 1" />
        <path d={OUTER_L} />
        <path d="M1350 367C1362 345 1369 312 1369 280C1369 240 1350 202 1320 172C1295 150 1260 134 1223 133C1200 133 1180 137 1157 148C1130 160 1100 185 1080 224C1062 260 1050 305 1044 340C1040 375 1041 415 1042 440C1044 475 1047 510 1049 533C1051 539 1060 540 1068 540C1095 538 1122 524 1134 505" />
        <path d="M1142 485C1140 455 1138 425 1138 397C1138 350 1145 310 1165 268C1180 243 1200 230 1223 230C1250 230 1270 250 1273 280C1273 298 1270 312 1265 323C1250 350 1235 375 1213 403C1195 425 1165 452 1142 464" />
        <path d="M1080 224L1165 268M1265 323L1350 367" strokeWidth="1.500" />
        <path d="M881 832C930 850 1080 930 1157 975" strokeWidth="1.300" />
        <path d="M881 832C930 850 1080 930 1157 975" stroke="#1788b8" strokeDasharray="3 18" />
        <path d="M914 876C960 895 1050 940 1101 972" />
      </g>
      <path d="M1205 543L1018 905" stroke="#85868a" strokeWidth="1.300" strokeDasharray="14 4 4 4" />
      <path d="M1297 590L1142 969" stroke="#7d7d7d" strokeWidth="2.200" />
      <path d="M1296 590C1298 660 1294 720 1280 765C1262 840 1220 915 1182 943C1168 955 1155 964 1142 969" stroke="#7d7d7d" strokeWidth="1.800" />
      <circle cx="1205" cy="543" r="3" fill="#77787c" />
      <circle cx="1018" cy="905" r="2.500" fill="#7d7d7d" />
      <circle cx="1142" cy="969" r="3" fill="#7d7d7d" />
      <path d="M1134 505L1308 596" stroke="#000" strokeWidth="2" />
      <path d="M1127 501L1356 620L1309 599" stroke="#0606e6" strokeWidth="1.400" />
      <path d="M1179 533L1263 577" stroke="#8e90e0" strokeWidth="1" strokeDasharray="6 3 2 2" />

      {/* axis triad */}
      <g>
        <path d="M386 919L398 892" stroke="#a9f5ae" strokeWidth="3.500" />
        <path d="M402 886L402 899L394 895Z" fill="#c2fbc5" />
        <path d="M393 894L402 898" stroke="#0d5a12" strokeWidth="2" />
        <path d="M396 926L408 932" stroke="#b00808" strokeWidth="5" />
        <path d="M404 926L416 936L404 935Z" fill="#b00808" />
        <path d="M384 919L394 925" stroke="#0a0a9c" strokeWidth="4" />
        <path d="M392 920L400 927L391 929Z" fill="#0a0ac0" />
        <circle cx="386" cy="918" r="1.800" fill="#187a3a" />
        <g fontFamily="Liberation Sans, sans-serif" fontSize="10">
          <text x="403" y="881" fill="#3f9a4c">Y</text>
          <text x="400" y="928" fill="#3a3af0">Z</text>
          <text x="418" y="939" fill="#ec4a4a">X</text>
        </g>
      </g>
    </svg>
  );
}

/* ---------- page sections ---------- */
function TitleBar() {
  return (
    <header className="flex h-[40px] shrink-0 items-center border-b border-t border-[#c0c0c0] bg-[#f7f7f7]">
      <div className="flex w-[145px] items-center pl-[4px]">
        <svg width="22" height="22" viewBox="0 0 22 22" fill="none" stroke="#da291c" strokeWidth="1.800">
          <path d="M5 2C11 1 13 3.500 7.500 7.500C12.500 8 11.500 11 8.500 14C6 16.500 4 17.500 1 18.500L5.500 10" />
          <path d="M20.500 8.500C16 8 13.500 10 15.500 12.500C18.500 15.500 16 18.500 11 17.500" />
        </svg>
        <div className="ml-[4px] w-[82px] whitespace-nowrap font-['Open_Sans',sans-serif] text-[14px] italic tracking-[-0.65px] text-[#da291c]">
          <span className="font-extrabold">SOLID</span>WORKS
        </div>
        <svg width="6" height="10" viewBox="0 0 6 10" className="ml-[22px]"><path d="M0 0L6 5L0 10Z" fill="#8a8a8a" /></svg>
      </div>
      <div className="h-full w-px bg-[#c0c0c0]" />
      <div className="flex items-center pl-[26px]">
        <Home />
        <div className="ml-[13px] flex items-center gap-[11px]"><NewDoc /><Caret /></div>
        <div className="ml-[10px] flex items-center gap-[11px]"><OpenDoc /><Caret /></div>
        <div className="ml-[10px] flex items-center gap-[11px]"><Save /><Caret /></div>
        <div className="ml-[10px] flex items-center gap-[11px]"><Print /><Caret /></div>
        <div className="ml-[10px] flex items-center gap-[11px]"><Undo /><Caret color="#aaa" /></div>
        <div className="ml-[10px] flex items-center gap-[11px]"><Undo flip /><Caret color="#aaa" /></div>
        <div className="ml-[4px] flex h-[33px] w-[47px] border border-[#8c8c8c]">
          <div className="flex w-[32px] items-center justify-center border-r border-[#8c8c8c] bg-[#b1b1b1]"><Cursor /></div>
          <div className="flex flex-1 items-center justify-center"><Caret /></div>
        </div>
        <div className="ml-[6px]"><Traffic /></div>
        <div className="ml-[13px]"><ListDoc /></div>
        <div className="ml-[13px]"><Gear /></div>
        <Caret className="ml-[11px]" />
      </div>
      <div className="ml-[371px] w-[80px] whitespace-nowrap text-center">Klien Bottle *</div>
      <div className="ml-auto flex items-center">
        <div className="flex h-[29px] w-[252px] items-center border border-[#b5b5b5] bg-white pl-[6px]">
          <svg width="18" height="18" viewBox="0 0 18 18"><rect width="18" height="18" rx="1" fill="#2a2a2a" /><path d="M4 4L9 8.500L4 13M9 13.500H14" fill="none" stroke="#fff" strokeWidth="1.500" /></svg>
          <span className="ml-[8px] text-[#5a5a5a]">Search Commands</span>
          <svg width="18" height="18" viewBox="0 0 18 18" fill="none" stroke="#888" strokeWidth="1.500" className="ml-auto"><circle cx="7.500" cy="7.500" r="6" /><path d="M12 12L17 17" strokeWidth="2" /></svg>
          <Caret className="ml-[9px] mr-[4px]" color="#888" />
        </div>
        <svg width="20" height="20" viewBox="0 0 20 20" fill="none" stroke="#444" strokeWidth="1.300" className="ml-[14px]"><circle cx="10" cy="10" r="8.800" /><circle cx="10" cy="8" r="3.800" /><path d="M4.500 16.500C5 13.500 7 12 8 11.500M15.500 16.500C15 13.500 13 12 12 11.500" /></svg>
        <svg width="20" height="20" viewBox="0 0 20 20" fill="none" stroke="#444" strokeWidth="1.500" className="ml-[21px]"><circle cx="10" cy="10" r="8.800" strokeWidth="1.300" /><path d="M7 7.500C7 4 13 4 13 7.500C13 9.500 10 9.500 10 12M10 13.500V15.500" /></svg>
        <div className="ml-[26px] mt-[10px] h-[2px] w-[10px] bg-[#444]" />
        <svg width="16" height="15" viewBox="0 0 16 15" fill="none" stroke="#444" strokeWidth="1.500" className="ml-[28px]"><path d="M6 5V1H15V8H10M1 5.500H10V13H1Z" /></svg>
        <svg width="12" height="12" viewBox="0 0 12 12" fill="none" stroke="#333" strokeWidth="1.500" className="ml-[27px] mr-[19px]"><path d="M1 1L11 11M11 1L1 11" /></svg>
      </div>
    </header>
  );
}

function Ribbon() {
  return (
    <div className="flex h-[82px] shrink-0 border-b border-[#868686] bg-[#f7f7f7]">
      <Big w="w-[98px] pl-[4px]" icon={<Bolts />} lines={["Design Study"]} caret />
      <VSep />
      <div className="w-[4px]" />
      <Big w="w-[77px]" icon={<Interf />} lines={["Interference", "Detection"]} />
      <Big w="w-[68px]" icon={<Measure />} lines={["Measure"]} />
      <Big w="w-[54px]" icon={<Markup />} lines={["Markup"]} />
      <Big w="w-[76px]" icon={<Mass />} lines={["Mass", "Properties"]} />
      <Big w="w-[68px]" icon={<Section />} lines={["Section", "Properties"]} />
      <Big w="w-[54px]" icon={<Sensor />} lines={["Sensor"]} />
      <Big w="w-[86px]" icon={<Perf />} lines={["Performance", "Evaluation"]} />
      <Col w="w-[155px]" items={[[<Check />, "Check"], [<GeoA />, "Geometry Analysis"], [<ImpD />, "Import Diagnostics", 1]]} />
      <Col w="w-[131px]" items={[[<BodyC />, "Body Compare"]]} />
      <VSep />
      <Col w="w-[149px]" items={[[<Dev />, "Deviation Analysis"], [<Zebra />, "Zebra Stripes"], [<Curv />, "Curvature"]]} />
      <Col w="w-[164px]" items={[[<Draft />, "Draft Analysis"], [<Undercut />, "Undercut Analysis"], [<Parting />, "Parting Line Analysis"]]} />
      <Col w="w-[166px]" items={[[<Symm />, "Symmetry Check"], [<Thick />, "Thickness Analysis"], [<CompD />, "Compare Documents"]]} />
      <Big w="w-[161px]" icon={<CheckAct />} lines={["Check Active Document"]} caret />
      <VSep />
      <Big w="w-[142px]" icon={<Conn3D />} lines={["3DEXPERIENCE", "Simulation Connector"]} off />
      <Big w="w-[116px]" icon={<SimX />} lines={["SimulationXpress", "Analysis Wizard"]} />
      <Big w="w-[102px]" icon={<Flo />} lines={["FloXpress", "Analysis Wizard"]} />
      <div className="flex flex-1 flex-col items-end border-r border-[#9a9a9a] pr-[8px] pt-[22px]">
        <svg width="10" height="9" viewBox="0 0 10 9" fill="none" stroke="#444" strokeWidth="1.300"><path d="M1 .5L4.500 4.500L1 8.500M5.500 .5L9 4.500L5.500 8.500" /></svg>
        <svg width="10" height="7" viewBox="0 0 10 7" fill="none" stroke="#333" strokeWidth="1.800" className="mt-[34px]"><path d="M1 6L5 1.500L9 6" /></svg>
      </div>
    </div>
  );
}

const panelTabs = [<Part />, <PropM />, <Tree />, <Cross />, <Ball s={19} />, <DimX />, <Cam />];

function Dot() {
  return <div className="h-[6px] w-[6px] rounded-full border border-[#8f8f8f] bg-[#cfcfcf]" />;
}

function FeaturePanel() {
  return (
    <aside className="relative flex w-[335px] shrink-0 flex-col border-l border-r border-l-[#c8c8c8] border-r-[#868686] bg-[#f7f7f7] text-[15px] tracking-[-0.22px]">
      <div className="mr-[2px] mt-[4px] flex h-[21px] items-center justify-center border-b border-t border-[#c4c4c4] pr-[2px]"><Dot /></div>
      <div className="mr-[2px] mt-[4px] flex h-[26px] border-t border-[#868686] pl-px">
        {panelTabs.map((t, i) => (
          <div key={i} className={"flex w-[40px] shrink-0 items-center justify-center border-r border-[#868686] " + (i === 0 ? "bg-[#f7f7f7]" : "border-b bg-[#d5d5d5]")}>{t}</div>
        ))}
        <div className="w-[6px] border-b border-[#868686] bg-[#d5d5d5]" />
        <div className="mt-[2px] flex flex-1 border border-[#adadad] bg-[#f4f4f4]">
          <div className="flex flex-1 items-center justify-center border-r border-[#adadad]"><svg width="4" height="8" viewBox="0 0 4 8"><path d="M4 0V8L0 4Z" fill="#000" /></svg></div>
          <div className="flex flex-1 items-center justify-center"><svg width="4" height="8" viewBox="0 0 4 8"><path d="M0 0V8L4 4Z" fill="#000" /></svg></div>
        </div>
      </div>
      <div className="ml-[4px] mr-[5px] flex h-[31px] items-center border border-t-0 border-[#c4c4c4] pl-px pt-[2px]"><Funnel /></div>
      <div className="mr-[2px] mt-[1px] flex h-[24px] items-center gap-[3px] overflow-hidden whitespace-nowrap pl-[3px]">
        <Part />
        <span>{"Klien Bottle (Default) <<Default>_Display Stat"}</span>
      </div>
      {tree.map(([icon, label, exp], i) => (
        <div key={i} className="flex h-[24px] items-center pl-[9px]">
          <div className="w-[16px]">
            {exp ? <svg width="5" height="8" viewBox="0 0 5 8" className="mb-[2px]"><path d="M0 0L5 4L0 8Z" fill="#555" /></svg> : null}
          </div>
          {icon}
          <span className="ml-[4px] whitespace-nowrap">{label}</span>
        </div>
      ))}
      <div className="mr-[2px] h-[4px] bg-[#3a8fc6]" />
      <div className="mb-[3px] mr-[2px] mt-auto flex h-[19px] items-center bg-[#f0f0f0]">
        <svg width="21" height="12" viewBox="0 0 21 12" fill="none" stroke="#555" strokeWidth="2"><path d="M12 1L7.500 6L12 11" /></svg>
        <div className="h-full w-[262px] bg-[#cdcdcd]" />
        <svg width="12" height="12" viewBox="0 0 12 12" fill="none" stroke="#555" strokeWidth="2" className="ml-[33px]"><path d="M2 1L6.500 6L2 11" /></svg>
      </div>
      <div className="mb-[1px] mr-[2px] h-[2px] border-t border-[#c0c0c0]" />
      <div className="absolute -right-[12px] top-[380px] flex h-[49px] w-[12px] items-center justify-center border border-l-0 border-[#868686] bg-[#f7f7f7]"><Dot /></div>
    </aside>
  );
}

function HeadsUp() {
  const c = "#9b9eab";
  return (
    <div className="flex h-[20px] items-center gap-[6px] pl-[615px] opacity-85">
      <ZFit />
      <ZArea />
      <Prev />
      <SecV />
      <DynA />
      <ViewO />
      <Caret color={c} />
      <div className="ml-[2px]"><Disp /></div>
      <Caret color={c} />
      <div className="ml-[2px]"><Eye /></div>
      <Caret color="#6b6d78" />
      <div className="ml-[2px]"><BallPen /></div>
      <BallScene />
      <Caret color="#5e606c" />
      <div className="ml-[2px]"><Monitor /></div>
      <Caret color="#5e606c" />
    </div>
  );
}

function DocControls() {
  return (
    <div className="ml-auto flex items-center gap-[12px] pr-[13px]">
      <svg width="14" height="14" viewBox="0 0 14 14" fill="none" stroke="#868994" strokeWidth="1.300"><path d="M1 1H12V13H1Z" /><path d="M6 4V10L2.500 7Z" fill="#868994" stroke="none" /></svg>
      <svg width="14" height="14" viewBox="0 0 14 14" fill="none" stroke="#868994" strokeWidth="1.300"><path d="M1 1H12V13H1Z" /><path d="M7.500 4V10L11 7Z" fill="#868994" stroke="none" /></svg>
      <div className="mx-[2px] mt-[12px] h-[2px] w-[10px] bg-[#868994]" />
      <svg width="16" height="14" viewBox="0 0 16 14" fill="none" stroke="#868994" strokeWidth="1.400"><path d="M6 5V1H15V7.500H10M1 5.500H10V13H1Z" /></svg>
      <svg width="12" height="12" viewBox="0 0 12 12" fill="none" stroke="#868994" strokeWidth="1.400"><path d="M1 1L11 11M11 1L1 11" /></svg>
    </div>
  );
}

const taskIcons = [<Home />, <Books />, <Folder />, <Palette />, <Ball s={19} />, <PropM />, <Forum />];

function Bottom() {
  const nav = ["M5 2V12M13 2L7 7L13 12Z", "M12 2L6 7L12 12Z", "M6 2L12 7L6 12Z", "M13 2V12M5 2L11 7L5 12Z"];
  return (
    <>
      <div className="flex h-[21px] shrink-0 border-b border-t border-[#868686] bg-[#f7f7f7] text-[15px] tracking-[-0.25px]">
        <div className="flex w-[83px] border-r border-[#868686] bg-[#8f92aa] pl-[2px]">
          {nav.map((d) => (
            <div key={d} className="flex flex-1 items-center justify-center border border-[#84879c] bg-[#a5a8be]">
              <svg width="18" height="14" viewBox="0 0 18 14"><path d={d} fill="#7f8298" stroke="#7f8298" strokeWidth="1.200" /></svg>
            </div>
          ))}
        </div>
        <div className="flex w-[76px] items-center justify-center border-r border-[#868686] pl-[4px] font-bold text-black">Model</div>
        <div className="flex w-[89px] items-center justify-center border-r border-[#868686] bg-[#d5d5d5]">3D Views</div>
        <div className="flex w-[144px] items-center border-r border-[#868686] bg-[#d5d5d5] pl-[13px]">Motion Study 1</div>
      </div>
      <footer className="flex h-[21px] shrink-0 items-center whitespace-nowrap bg-[#f7f7f7] pt-[4px] text-[14.5px] tracking-[-0.12px] text-black">
        <div className="w-[1597px] pl-[1px]">Updating Cut list. Disable automatic update for cut list to increase performance</div>
        <div className="w-[202px]">Editing Part</div>
        <div className="w-[69px]">MMGS</div>
        <svg width="6" height="4" viewBox="0 0 6 4"><path d="M0 4H6L3 0Z" fill="#444" /></svg>
        <svg width="18" height="16" viewBox="0 0 18 16" fill="#eee" stroke="#444" strokeWidth="1.100" className="-mt-[6px] ml-[26px]"><path d="M2 5L7 1L16 7L12 14L2 9Z" /><circle cx="8" cy="6" r="2.300" /><path d="M12 14V10L16 7M2 5L12 10" fill="none" /></svg>
      </footer>
    </>
  );
}

export default function App() {
  return (
    <div className="flex h-[1030px] w-[1920px] flex-col overflow-hidden bg-[#f7f7f7] font-['Open_Sans','Noto_Sans',sans-serif] text-[14.5px] leading-[19px] tracking-[-0.48px] text-[#111]">
      <TitleBar />
      <Ribbon />
      <main className="relative flex min-h-0 flex-1 flex-col bg-[#c4c7d3]">
        <Model />
        <div className="relative flex h-[28px] shrink-0 items-center">
          <nav className="flex h-[28px] text-[15px] tracking-[-0.3px] text-[#333]">
            {tabs.map(([t, w]) => (
              <div key={t} className={"flex shrink-0 items-center justify-center whitespace-nowrap border-b border-r border-[#868686] " + w + (t === "Evaluate" ? " bg-[#f7f7f7] font-bold tracking-[-0.6px]" : " bg-[#d5d5d5]")}>{t}</div>
            ))}
          </nav>
          <DocControls />
        </div>
        <div className="relative flex min-h-0 flex-1">
          <FeaturePanel />
          <div className="flex min-w-0 flex-1 pt-[5px]">
            <HeadsUp />
            <div className="ml-auto mt-[25px] flex h-[210px] w-[33px] flex-col border-l border-t border-[#868686]">
              {taskIcons.map((t, i) => (
                <div key={i} className={"flex h-[30px] items-center justify-center border-b border-[#868686] " + (i === 0 ? "bg-[#f7f7f7]" : "bg-[#d5d5d5]")}>{t}</div>
              ))}
            </div>
          </div>
        </div>
      </main>
      <Bottom />
    </div>
  );
}
